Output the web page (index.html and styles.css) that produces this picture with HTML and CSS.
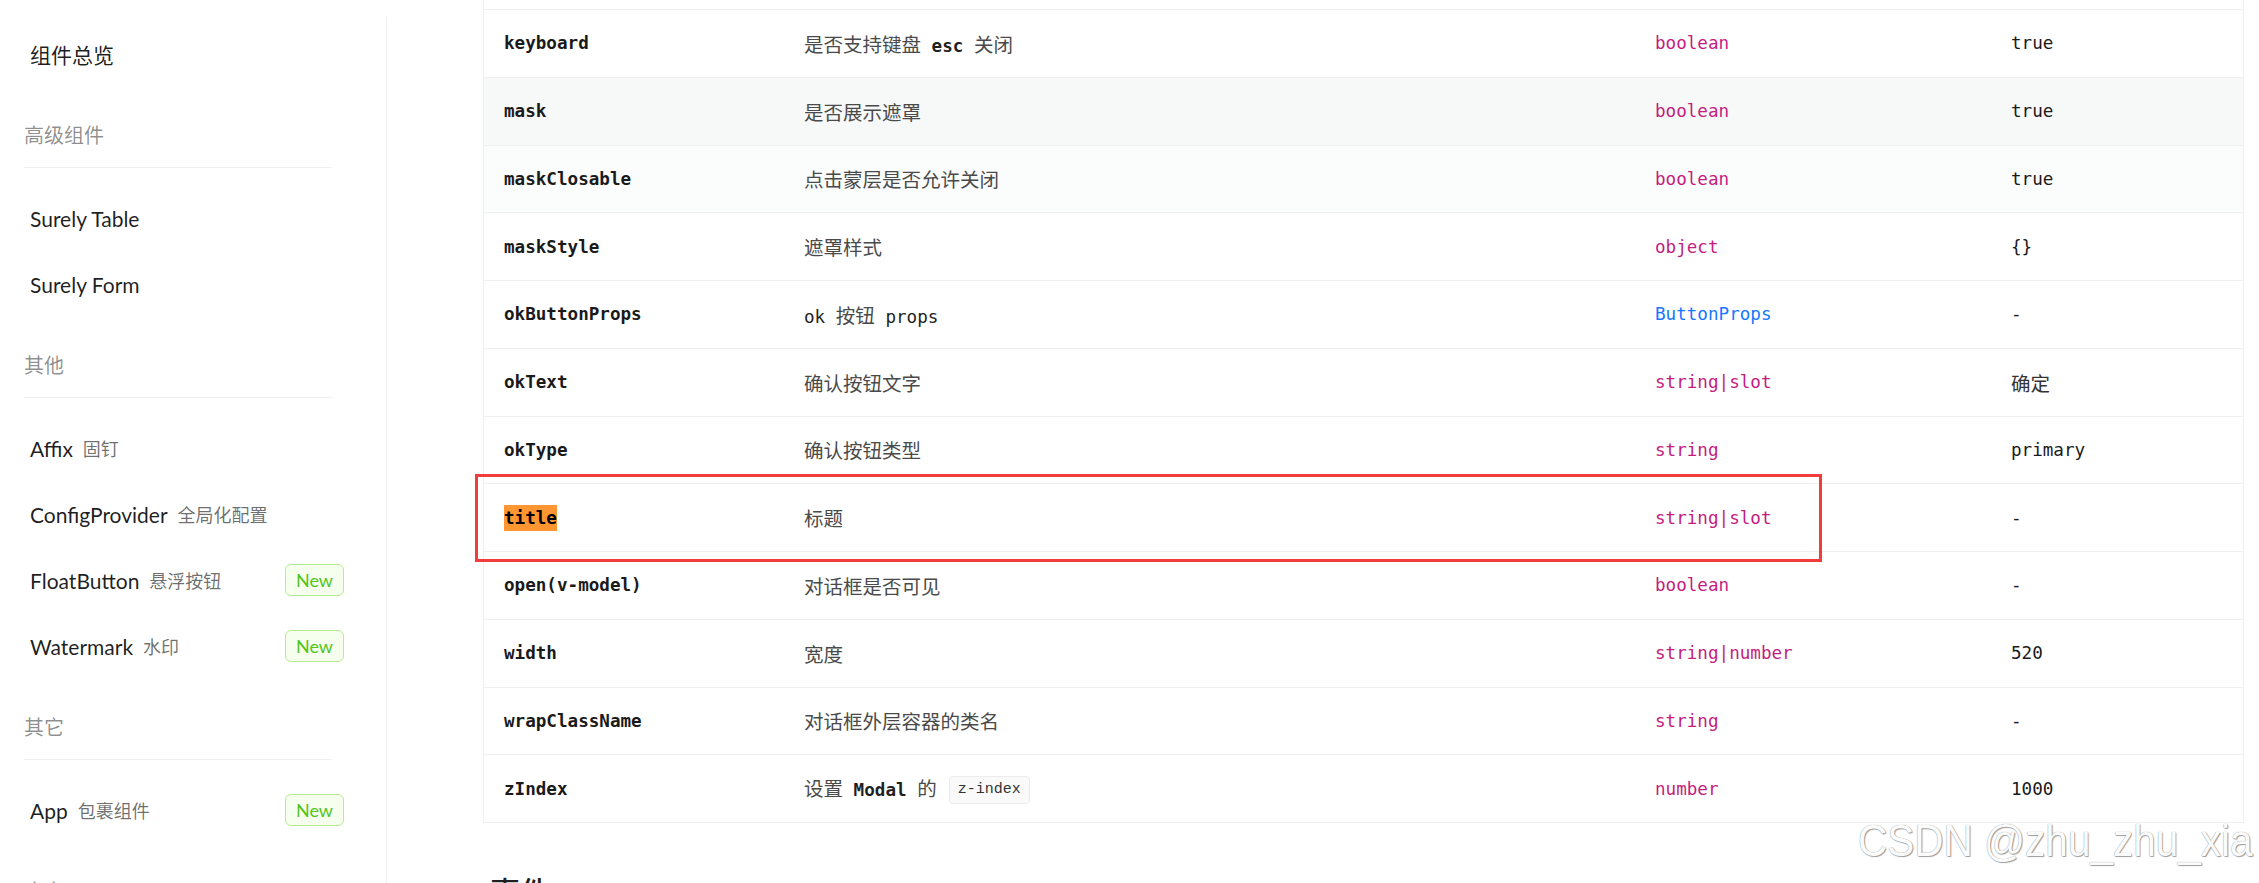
FILE: index.html
```html
<!DOCTYPE html>
<html lang="zh-CN">
<head>
<meta charset="utf-8">
<title>Modal 对话框 API</title>
<link rel="stylesheet" href="styles.css">
</head>
<body>
<div class="page">
  <aside class="sider">
    <nav class="menu">
      <a class="item">组件总览</a>
      <div class="group">高级组件</div>
      <a class="item">Surely Table</a>
      <a class="item">Surely Form</a>
      <div class="group">其他</div>
      <a class="item">Affix<span class="sub">固钉</span></a>
      <a class="item">ConfigProvider<span class="sub">全局化配置</span></a>
      <a class="item">FloatButton<span class="sub">悬浮按钮</span><span class="badge">New</span></a>
      <a class="item">Watermark<span class="sub">水印</span><span class="badge">New</span></a>
      <div class="group">其它</div>
      <a class="item">App<span class="sub">包裹组件</span><span class="badge">New</span></a>
      <div class="group">废弃</div>
    </nav>
  </aside>
  <main class="content">
    <div class="api">
      <table class="props">
        <colgroup>
          <col class="c1"><col class="c2"><col class="c3"><col class="c4">
        </colgroup>
        <tbody>
          <tr><td class="name">getContainer</td><td class="desc">指定 Modal 挂载的 HTML 节点</td><td class="type">(instance): HTMLElement</td><td class="def">() =&gt; document.body</td></tr>
          <tr><td class="name">keyboard</td><td class="desc">是否支持键盘<span class="en b"> esc </span>关闭</td><td class="type">boolean</td><td class="def">true</td></tr>
          <tr class="hover"><td class="name">mask</td><td class="desc">是否展示遮罩</td><td class="type">boolean</td><td class="def">true</td></tr>
          <tr class="fade"><td class="name">maskClosable</td><td class="desc">点击蒙层是否允许关闭</td><td class="type">boolean</td><td class="def">true</td></tr>
          <tr><td class="name">maskStyle</td><td class="desc">遮罩样式</td><td class="type">object</td><td class="def">{}</td></tr>
          <tr><td class="name">okButtonProps</td><td class="desc"><span class="en">ok </span>按钮<span class="en"> props</span></td><td class="type link">ButtonProps</td><td class="def">-</td></tr>
          <tr><td class="name">okText</td><td class="desc">确认按钮文字</td><td class="type">string|slot</td><td class="def"><span class="cn">确定</span></td></tr>
          <tr><td class="name">okType</td><td class="desc">确认按钮类型</td><td class="type">string</td><td class="def">primary</td></tr>
          <tr><td class="name"><span class="hl">title</span></td><td class="desc">标题</td><td class="type">string|slot</td><td class="def">-</td></tr>
          <tr><td class="name">open(v-model)</td><td class="desc">对话框是否可见</td><td class="type">boolean</td><td class="def">-</td></tr>
          <tr><td class="name">width</td><td class="desc">宽度</td><td class="type">string|number</td><td class="def">520</td></tr>
          <tr><td class="name">wrapClassName</td><td class="desc">对话框外层容器的类名</td><td class="type">string</td><td class="def">-</td></tr>
          <tr><td class="name">zIndex</td><td class="desc">设置<span class="en b"> Modal </span>的<code class="code">z-index</code></td><td class="type">number</td><td class="def">1000</td></tr>
        </tbody>
      </table>
      <div class="mark"></div>
    </div>
    <h2 class="h2">事件</h2>
  </main>
</div>
<div class="watermark">CSDN @zhu_zhu_xia</div>
</body>
</html>
```

FILE: styles.css
```css
* { box-sizing: border-box; }
html, body { margin: 0; padding: 0; background: #fff; }
body {
  overflow: hidden;
  font-family: Lato, "Noto Sans CJK SC", sans-serif;
  color: rgba(0, 0, 0, 0.88);
}
.page { display: flex; min-height: 100vh; }

/* sidebar */
.sider {
  flex: none;
  width: 387px;
  margin-top: 17px;
  padding: 7px 0 0 24px;
  border-right: 1px solid #f0f0f0;
}
.menu { display: flex; flex-direction: column; }
.item {
  display: flex;
  align-items: center;
  height: 60px;
  width: 320px;
  padding-left: 6px;
  margin-bottom: 6px;
  font-size: 21px;
  color: rgba(0, 0, 0, 0.88);
  white-space: nowrap;
}
.sub {
  margin-left: 10px;
  font-family: "Noto Sans CJK SC", sans-serif;
  font-size: 18px;
  color: rgba(0, 0, 0, 0.58);
}
.badge {
  margin-left: auto;
  width: 59px;
  height: 32px;
  display: flex;
  align-items: center;
  justify-content: center;
  border: 1px solid #b7eb8f;
  background: #f6ffed;
  color: #52c41a;
  border-radius: 6px;
  font-size: 18px;
}
.group {
  width: 308px;
  margin-top: 27.5px;
  margin-bottom: 20px;
  padding-bottom: 16.5px;
  line-height: 33px;
  border-bottom: 1px solid #f0f0f0;
  font-family: "Noto Sans CJK SC", sans-serif;
  font-size: 20px;
  color: rgba(0, 0, 0, 0.45);
}

/* content */
.content {
  flex: 1;
  min-width: 0;
  padding: 0 15px 0 96px;
}
.api { position: relative; margin-top: -57.75px; }
.props {
  width: 100%;
  table-layout: fixed;
  border-collapse: separate;
  border-spacing: 0;
  border: 1px solid #f0f0f0;
  border-top: 0;
  font-family: "DejaVu Sans Mono", "Noto Sans CJK SC", monospace;
  font-size: 17.6px;
  color: rgba(0, 0, 0, 0.88);
}
.c1 { width: 300px; }
.c2 { width: 851px; }
.c3 { width: 356px; }
.props td {
  height: 67.75px;
  padding: 0 0 0 20px;
  border-bottom: 1px solid #f0f0f0;
  vertical-align: middle;
  white-space: nowrap;
}
.props tr:last-child td { border-bottom: 0; height: 66.75px; }
.props tr.hover td { background: #f7f8f8; }
.props tr.fade td { background: #fbfcfc; }
.name { font-weight: 700; color: #1a1a1a; }
.desc {
  font-family: "Noto Sans CJK SC", sans-serif;
  font-size: 19.5px;
  color: #4a4a4a;
}
.en {
  font-family: "DejaVu Sans Mono", monospace;
  font-size: 17.6px;
  color: #1f1f1f;
  white-space: pre;
}
.en.b { font-weight: 600; }
.cn { font-family: "Noto Sans CJK SC", sans-serif; font-size: 19.5px; color: #333; }
.type { color: #c41d7f; }
.type.link { color: #1677ff; }
.def { color: #1a1a1a; }
.hl { background: #ff9632; color: #000; padding: 3px 0; }
.code {
  display: inline-block;
  margin-left: 12px;
  padding: 0 8px;
  line-height: 26px;
  border: 1px solid #ececec;
  border-radius: 4px;
  background: #fafafa;
  font-family: "Liberation Mono", monospace;
  font-size: 15px;
  color: #333;
  vertical-align: middle;
}
.mark {
  position: absolute;
  left: -8px;
  top: 531.75px;
  width: 1347px;
  height: 88px;
  border: 3px solid #f33c3c;
}
.h2 {
  margin: 46px 0 0 7px;
  font-family: "Noto Sans CJK SC", sans-serif;
  font-size: 30px;
  line-height: 42px;
  font-weight: 500;
  color: rgba(0, 0, 0, 0.88);
}

/* overlay watermark */
.watermark {
  position: absolute;
  left: 1858px;
  top: 813px;
  font-family: "Liberation Sans", sans-serif;
  font-size: 45px;
  line-height: 56px;
  color: #fbfbfb;
  text-shadow: 0 0 1px #7c7c7c, 1px 1px 1px #a0a0a0;
  white-space: nowrap;
  transform: scaleX(0.9);
  transform-origin: left center;
}
```
